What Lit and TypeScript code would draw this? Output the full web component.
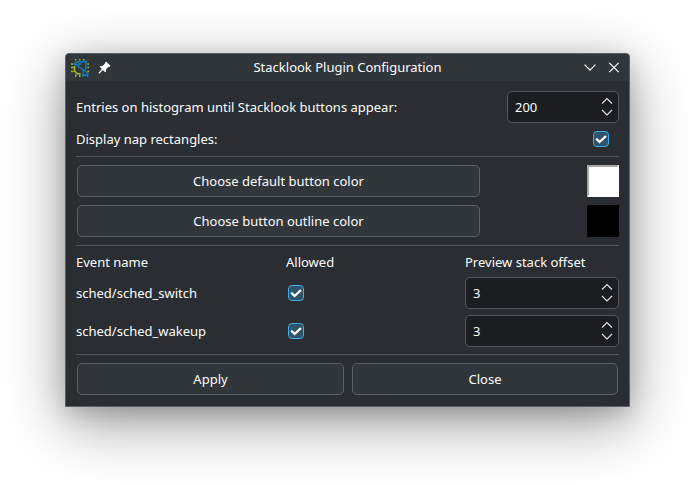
import { LitElement, html, css, svg } from "lit";
import { customElement, property } from "lit/decorators.js";

@customElement("check-box")
class CheckBox extends LitElement {
  static styles = css`
    :host { display: block; width: 16px; height: 16px; }
    .box {
      box-sizing: border-box; width: 16px; height: 16px;
      border: 1px solid #3daee9; border-radius: 4px; background: #2f5469;
    }
    svg { display: block; width: 14px; height: 14px; }
  `;
  render() {
    return html`<div class="box" role="checkbox" aria-checked="true">
      <svg viewBox="0 0 14 14"><path d="M2.2 6.6 L5.6 10 L12 4" fill="none" stroke="#fff" stroke-width="2.2"/></svg>
    </div>`;
  }
}

@customElement("spin-box")
class SpinBox extends LitElement {
  @property() value = "";
  static styles = css`
    :host { display: block; height: 32px; }
    .field {
      box-sizing: border-box; height: 32px; display: flex; align-items: center;
      justify-content: space-between; padding: 0 5px 0 7px;
      border: 1px solid #54575b; border-radius: 5px; background: #1b1e20;
    }
    svg { display: block; width: 12px; height: 30px; }
  `;
  render() {
    return html`<div class="field">
      <span>${this.value}</span>
      <svg viewBox="0 0 12 30" fill="none" stroke="#e4e5e6" stroke-width="1.1">
        <path d="M1 11.5 L6 6.5 L11 11.5"/><path d="M1 18 L6 23 L11 18"/>
      </svg>
    </div>`;
  }
}

const logo = svg`
  <g fill="none" stroke="#a4b92c">
    <path d="M3.5 7V12L6.3 14.8H9.5" stroke-width="1.6"/>
    <path d="M0 5H2M0 8.5H2.6M0 12.5H2.6M4.7 15.2V18M8.7 15.5V18M4.7 0V1.5M8.8 0V1.5M12.8 0V1.5M16.4 5H18M16.4 8.5H18M16.4 12.5H18" stroke-width="1.4"/>
  </g>
  <g fill="none" stroke="#0f83c4" stroke-width="1.3" stroke-linejoin="round">
    <path d="M3 5.4C4 3 6.5 2.4 9.5 2.8L15.6 2.5L14.6 4.8C15.6 7.5 15 9.8 13.6 11.4L16.8 14.6V17.3L14.2 15.4L11.6 17.3L12.4 11.2C11.2 10.8 10.4 10 9.8 8.8L7.6 8.6L8 7L3 5.4Z"/>
    <path d="M4.5 5.4L10.5 4.9"/>
  </g>`;

@customElement("app-root")
class AppRoot extends LitElement {
  static styles = css`
    :host {
      display: block; box-sizing: border-box; width: 696px; height: 485px;
      padding: 53px 66px 78px 65px; background: #fff; color: #fcfcfc;
      font: 13px/18px "Noto Sans", sans-serif; overflow: hidden;
    }
    .window {
      box-sizing: border-box; height: 354px; border: 1px solid #5d6064;
      border-radius: 4px 4px 0 0; background: #2a2e32;
      box-shadow: 0 16px 60px rgba(0,0,0,.4), 0 6px 22px rgba(0,0,0,.16);
    }
    .title {
      height: 27px; display: grid; grid-template-columns: 45px 1fr 45px;
      align-items: center; background: #31363b; border-radius: 3px 3px 0 0;
    }
    .title h1 { margin: 0; font: inherit; text-align: center; padding-bottom: 1px; }
    .left, .right { display: flex; align-items: center; height: 27px; }
    .left { padding-left: 5px; gap: 9px; }
    .right { gap: 12px; }
    svg { display: block; flex: none; }
    .body { padding: 10px 10px 0; }
    .row { display: flex; align-items: center; justify-content: space-between; }
    .tall { height: 32px; }
    .nap { height: 16px; margin: 8px 0 9px; padding-right: 10px; }
    .count { width: 112px; }
    hr { height: 1px; margin: 0; border: 0; background: #54575b; }
    .colors { display: grid; gap: 8px; padding: 8px 0 8px 1px; }
    .button {
      box-sizing: border-box; height: 32px; border: 1px solid #5c5f63; border-radius: 5px;
      background: #31363b; display: flex; align-items: center; justify-content: center;
    }
    .pick { width: 403px; }
    .swatch { box-sizing: border-box; width: 32px; height: 32px; }
    .fill { background: #fff; border: 2px solid; border-color: #a9a9a9 #fff #fff #a9a9a9; }
    .outline { background: #000; }
    .events {
      display: grid; grid-template-columns: 210px 179px 154px;
      grid-template-rows: 18px 32px 32px; align-items: center;
      row-gap: 6px; padding: 7px 0;
    }
    .mark { padding-left: 2px; }
    .actions { display: grid; grid-template-columns: 267px 266px; gap: 8px; padding: 8px 0 0 1px; }
  `;
  render() {
    return html`<div class="window">
      <div class="title">
        <div class="left">
          <svg width="18" height="18" viewBox="0 0 18 18">${logo}</svg>
          <svg width="13" height="13" viewBox="0 0 13 13" fill="#fcfcfc">
            <path d="M8.2 .8L12.3 4.5L11.5 6L10.4 6L8 8.5L8 10.6L7 11.3L4.8 9.1L1.7 12.4L.7 12.4L.7 11.5L3.8 8.1L1.8 6L2.5 5L4.6 5L7 2.5L7 1.5Z"/>
          </svg>
        </div>
        <h1>Stacklook Plugin Configuration</h1>
        <div class="right">
          <svg width="12" height="12" viewBox="0 0 12 12" fill="none" stroke="#fcfcfc" stroke-width="1.2"><path d="M.6 2.7L6 8.1L11.4 2.7"/></svg>
          <svg width="12" height="12" viewBox="0 0 12 12" fill="none" stroke="#fcfcfc" stroke-width="1.2"><path d="M1.3 .8L10.7 10.2M10.7 .8L1.3 10.2"/></svg>
        </div>
      </div>
      <div class="body">
        <div class="row tall"><span>Entries on histogram until Stacklook buttons appear:</span><spin-box class="count" value="200"></spin-box></div>
        <div class="row nap"><span>Display nap rectangles:</span><check-box></check-box></div>
        <hr>
        <div class="colors">
          <div class="row"><div class="button pick">Choose default button color</div><div class="swatch fill"></div></div>
          <div class="row"><div class="button pick">Choose button outline color</div><div class="swatch outline"></div></div>
        </div>
        <hr>
        <div class="events">
          <span>Event name</span><span>Allowed</span><span>Preview stack offset</span>
          ${["sched/sched_switch", "sched/sched_wakeup"].map(
            (name) => html`<span>${name}</span><check-box class="mark"></check-box><spin-box value="3"></spin-box>`
          )}
        </div>
        <hr>
        <div class="actions"><div class="button">Apply</div><div class="button">Close</div></div>
      </div>
    </div>`;
  }
}
